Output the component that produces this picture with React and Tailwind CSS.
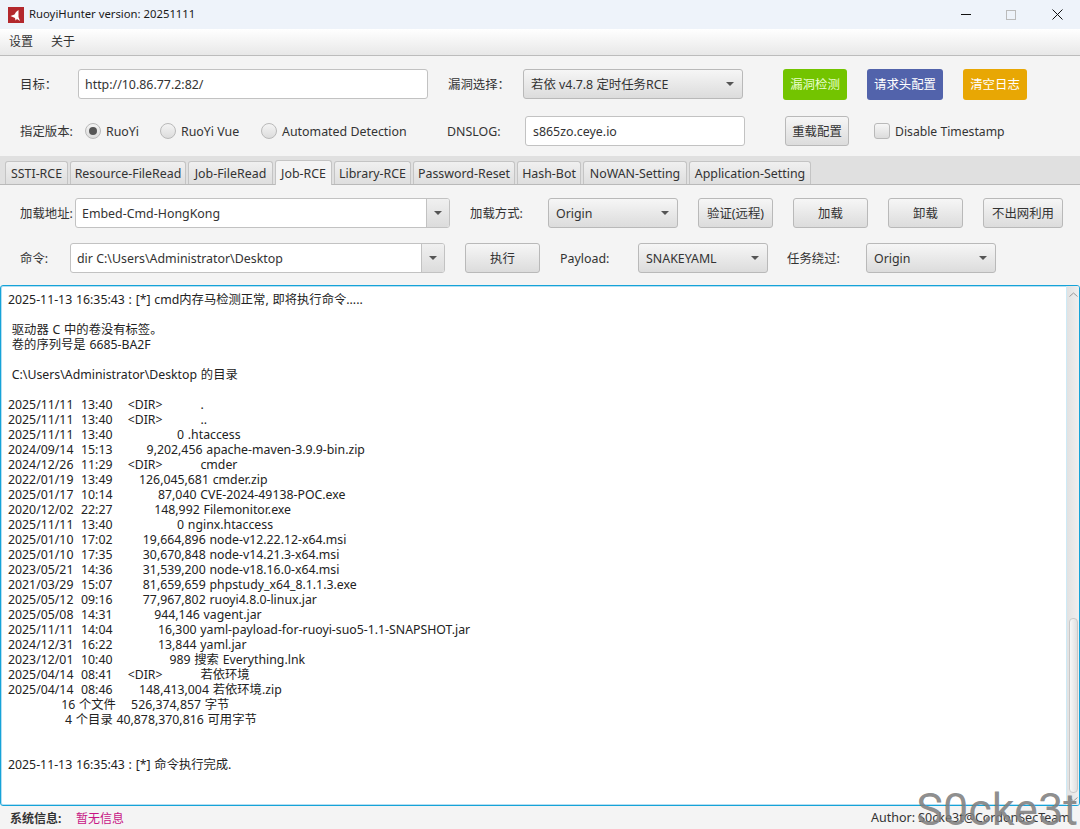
const LOG_LINES = [
  "2025-11-13 16:35:43 : [*] cmd内存马检测正常, 即将执行命令.....",
  "",
  " 驱动器 C 中的卷没有标签。",
  " 卷的序列号是 6685-BA2F",
  "",
  " C:\\Users\\Administrator\\Desktop 的目录",
  "",
  "2025/11/11  13:40    <DIR>          .",
  "2025/11/11  13:40    <DIR>          ..",
  "2025/11/11  13:40                 0 .htaccess",
  "2024/09/14  15:13         9,202,456 apache-maven-3.9.9-bin.zip",
  "2024/12/26  11:29    <DIR>          cmder",
  "2022/01/19  13:49       126,045,681 cmder.zip",
  "2025/01/17  10:14            87,040 CVE-2024-49138-POC.exe",
  "2020/12/02  22:27           148,992 Filemonitor.exe",
  "2025/11/11  13:40                 0 nginx.htaccess",
  "2025/01/10  17:02        19,664,896 node-v12.22.12-x64.msi",
  "2025/01/10  17:35        30,670,848 node-v14.21.3-x64.msi",
  "2023/05/21  14:36        31,539,200 node-v18.16.0-x64.msi",
  "2021/03/29  15:07        81,659,659 phpstudy_x64_8.1.1.3.exe",
  "2025/05/12  09:16        77,967,802 ruoyi4.8.0-linux.jar",
  "2025/05/08  14:31           944,146 vagent.jar",
  "2025/11/11  14:04            16,300 yaml-payload-for-ruoyi-suo5-1.1-SNAPSHOT.jar",
  "2024/12/31  16:22            13,844 yaml.jar",
  "2023/12/01  10:40               989 搜索 Everything.lnk",
  "2025/04/14  08:41    <DIR>          若依环境",
  "2025/04/14  08:46       148,413,004 若依环境.zip",
  "              16 个文件    526,374,857 字节",
  "               4 个目录 40,878,370,816 可用字节",
  "",
  "",
  "2025-11-13 16:35:43 : [*] 命令执行完成.",
];

const TABS = [
  ["SSTI-RCE", "w-[63px]"],
  ["Resource-FileRead", "w-[116px]"],
  ["Job-FileRead", "w-[85px]"],
  ["Job-RCE", "w-[57px]"],
  ["Library-RCE", "w-[77px]"],
  ["Password-Reset", "w-[102px]"],
  ["Hash-Bot", "w-[64px]"],
  ["NoWAN-Setting", "w-[104px]"],
  ["Application-Setting", "w-[122px]"],
];

const raised = "border border-[#b9b9b9] rounded-[3px] bg-gradient-to-b from-[#f6f6f6] to-[#dcdcdc] text-[#333]";
const field = "border border-[#c2c2c2] rounded-[3px] bg-white text-[#333] flex items-center";

function Caret() {
  return (
    <svg width="8" height="4" viewBox="0 0 8 4" className="shrink-0">
      <path d="M0 0h8L4 4z" fill="#555" />
    </svg>
  );
}

function Label({ className, children }) {
  return <span className={`pt-[2px] whitespace-nowrap ${className}`}>{children}</span>;
}

function Button({ className, children }) {
  return <div className={`${raised} flex items-center justify-center h-[30px] pt-[2px] ${className}`}>{children}</div>;
}

function Select({ className, children }) {
  return (
    <div className={`${raised} flex items-center justify-between h-[30px] pl-[7px] pr-[8px] ${className}`}>
      <span className="pt-[2px]">{children}</span>
      <Caret />
    </div>
  );
}

function ComboEdit({ className, children }) {
  return (
    <div className={`${field} h-[30px] overflow-hidden ${className}`}>
      <span className="flex-1 pl-[6px] pt-[2px]">{children}</span>
      <span className="w-[23px] h-full flex items-center justify-center border-l border-[#c2c2c2] bg-gradient-to-b from-[#f0f0f0] to-[#dcdcdc]">
        <Caret />
      </span>
    </div>
  );
}

function Radio({ checked, className, children }) {
  return (
    <div className={`flex items-center gap-[5px] ${className}`}>
      <span className="w-[16px] h-[16px] rounded-full border border-[#b9b9b9] bg-gradient-to-b from-[#f4f4f4] to-[#dcdcdc] flex items-center justify-center">
        {checked && <span className="w-[8px] h-[8px] rounded-full bg-[#555]" />}
      </span>
      <span className="pt-[2px]">{children}</span>
    </div>
  );
}

export default function App() {
  return (
    <div className="relative w-[1080px] h-[829px] overflow-hidden flex flex-col bg-[#f4f4f4] text-[12.4px] text-[#333] font-['Noto_Sans','Noto_Sans_CJK_SC',sans-serif]">
      {/* title bar */}
      <div className="h-[29px] shrink-0 bg-[#eef3fa] flex items-center pl-[8px] text-[#1a1a1a] text-[11.3px]">
        <svg width="16" height="16" viewBox="0 0 16 16" className="shrink-0">
          <rect width="16" height="16" fill="#b3282d" />
          <path d="M2.5 9l4-1.5L8 5l2.5-2v7l1.5 4-3-2-1.5 1.5L7 11z" fill="#fff" />
        </svg>
        <span className="ml-[5px]">RuoyiHunter version: 20251111</span>
        <div className="ml-auto flex items-center">
          <span className="w-[10px] h-[1px] bg-[#111] mr-[35px]" />
          <span className="w-[10px] h-[10px] border border-[#bbb] mr-[36px]" />
          <svg width="11" height="11" viewBox="0 0 11 11" className="mr-[17px]">
            <path d="M.5.5l10 10M10.5.5l-10 10" stroke="#111" strokeWidth="1" />
          </svg>
        </div>
      </div>

      {/* menu */}
      <div className="h-[27px] shrink-0 flex items-center gap-[18px] pl-[9px] border-b border-[#bcbcbc] bg-gradient-to-b from-white to-[#e8e8e8] text-[12px]">
        <span>设置</span>
        <span>关于</span>
      </div>

      {/* top form */}
      <div className="h-[100px] shrink-0 pl-[20px] pt-[13px] flex flex-col gap-[17px]">
        <div className="flex items-center h-[30px]">
          <Label className="w-[58px]">目标：</Label>
          <div className={`${field} w-[350px] h-[30px] pl-[6px] pt-[2px]`}>http://10.86.77.2:82/</div>
          <Label className="ml-[20px] w-[75px]">漏洞选择：</Label>
          <Select className="w-[220px]">若依 v4.7.8 定时任务RCE</Select>
          <div className="ml-[40px] w-[64px] h-[31px] pt-[2px] rounded-[3px] bg-[#73c400] text-[#eaffd0] flex items-center justify-center">漏洞检测</div>
          <div className="ml-[20px] w-[76px] h-[31px] pt-[2px] rounded-[3px] bg-[#5263ab] text-white flex items-center justify-center">请求头配置</div>
          <div className="ml-[20px] w-[64px] h-[31px] pt-[2px] rounded-[3px] bg-[#e8a704] text-white flex items-center justify-center">清空日志</div>
        </div>
        <div className="flex items-center h-[30px]">
          <Label className="w-[65px]">指定版本:</Label>
          <Radio checked className="w-[75px]">RuoYi</Radio>
          <Radio className="w-[101px]">RuoYi Vue</Radio>
          <Radio className="w-[186px]">Automated Detection</Radio>
          <Label className="w-[78px]">DNSLOG:</Label>
          <div className={`${field} w-[220px] h-[30px] pl-[7px] pt-[2px]`}>s865zo.ceye.io</div>
          <Button className="ml-[40px] w-[64px]">重载配置</Button>
          <span className={`${raised} ml-[25px] w-[16px] h-[16px]`} />
          <Label className="ml-[5px] text-[12.2px]">Disable Timestamp</Label>
        </div>
      </div>

      {/* tabs */}
      <div className="h-[29px] shrink-0 bg-[#e0e0e0] border-b border-[#b9b9b9] flex items-end gap-[2px] pl-[5px]">
        {TABS.map(([name, width]) => (
          <div
            key={name}
            className={`${width} pt-[2px] flex items-center justify-center rounded-t-[3px] border border-[#c4c4c4] ${
              name === "Job-RCE"
                ? "h-[25px] -mb-px border-b-0 bg-[#f4f4f4]"
                : "h-[23px] border-b-0 bg-gradient-to-b from-[#f0f0f0] to-[#dedede]"
            }`}
          >
            {name}
          </div>
        ))}
      </div>

      {/* tab body */}
      <div className="h-[100px] shrink-0 pl-[20px] pt-[13px] flex flex-col gap-[15px]">
        <div className="flex items-center h-[30px]">
          <Label className="w-[55px]">加载地址:</Label>
          <ComboEdit className="w-[375px]">Embed-Cmd-HongKong</ComboEdit>
          <Label className="ml-[20px] w-[78px]">加载方式:</Label>
          <Select className="w-[130px]">Origin</Select>
          <Button className="ml-[20px] w-[75px]">验证(远程)</Button>
          <Button className="ml-[20px] w-[75px]">加载</Button>
          <Button className="ml-[20px] w-[75px]">卸载</Button>
          <Button className="ml-[20px] w-[80px]">不出网利用</Button>
        </div>
        <div className="flex items-center h-[30px]">
          <Label className="w-[50px]">命令:</Label>
          <ComboEdit className="w-[375px]">dir C:\Users\Administrator\Desktop</ComboEdit>
          <Button className="ml-[20px] w-[75px]">执行</Button>
          <Label className="ml-[20px] w-[78px]">Payload:</Label>
          <Select className="w-[130px]">SNAKEYAML</Select>
          <Label className="ml-[19px] w-[79px]">任务绕过:</Label>
          <Select className="w-[130px]">Origin</Select>
        </div>
      </div>

      {/* log */}
      <div className="h-[521px] shrink-0 flex border border-[#15a3d8] rounded-[3px] bg-white overflow-hidden shadow-[inset_0_0_0_1px_#b5dff2]">
        <div className="flex-1 pl-[7px] pt-[6px] text-[12.3px] leading-[15px] [word-spacing:0.6px] text-[#222] whitespace-pre">
          {LOG_LINES.map((line, i) => (
            <div key={i} className="h-[15px]">{line}</div>
          ))}
        </div>
        <div className="w-[13px] shrink-0 flex flex-col items-center bg-gradient-to-r from-[#e2e2e2] to-[#efefef] border-l border-[#cdeaf6] pb-[2px]">
          <svg width="9" height="5" viewBox="0 0 9 5" className="mt-[6px]">
            <path d="M.5 4.5L4.5 1l4 3.5" fill="none" stroke="#999" />
          </svg>
          <div className="mt-auto w-[9px] h-[175px] rounded-[4px] border border-[#c8c8c8] bg-gradient-to-r from-[#f8f8f8] to-[#e0e0e0]" />
          <svg width="9" height="5" viewBox="0 0 9 5" className="mt-[4px] mb-[1px]">
            <path d="M.5.5l4 3.5 4-3.5" fill="none" stroke="#999" />
          </svg>
        </div>
      </div>

      {/* status */}
      <div className="flex-1 flex items-center pl-[10px] pr-[10px] pt-[2px] text-[12px]">
        <span className="font-bold w-[66px]">系统信息:</span>
        <span className="text-[#c71585]">暂无信息</span>
        <span className="ml-auto text-[12.5px]">Author: S0cke3t@CordonSecTeam</span>
      </div>

      {/* watermark */}
      <span className="absolute right-[2px] bottom-[-6px] text-[45px] leading-[50px] text-[#808080]/90 font-['Roboto',sans-serif]">S0cke3t</span>
    </div>
  );
}
